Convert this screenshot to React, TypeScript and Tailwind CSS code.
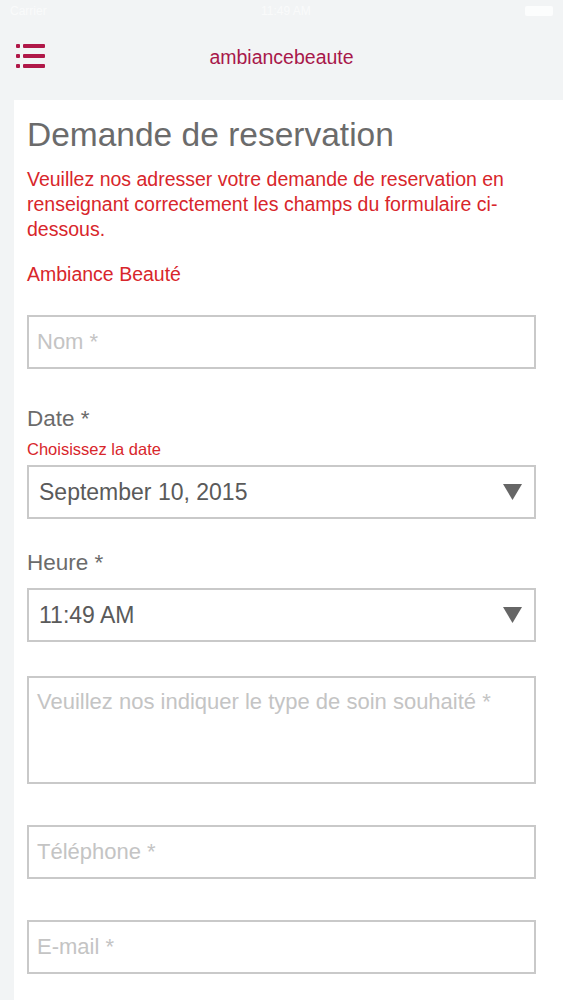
import React from "react";

function Select({ value }: { value: string }) {
  return (
    <div className="flex h-[54px] items-center justify-between border-2 border-[#c9c9c9] bg-white pl-[10px] pr-[12px]">
      <span className="text-[23px] text-[#5a5a5a]">{value}</span>
      <svg width="19" height="16" viewBox="0 0 19 16">
        <polygon points="0,0 19,0 9.5,16" fill="#666666" />
      </svg>
    </div>
  );
}

function Input({ placeholder, tall }: { placeholder: string; tall?: boolean }) {
  return (
    <div
      className={`border-2 border-[#c9c9c9] bg-white px-[8px] ${tall ? "h-[108px] pt-[11px]" : "flex h-[54px] items-center"}`}
    >
      <span className="text-[22px] leading-[26px] text-[#c4c4c4]">{placeholder}</span>
    </div>
  );
}

export default function App() {
  return (
    <div
      className="min-h-[1000px] w-[563px] overflow-hidden bg-[#f2f4f5]"
      style={{ fontFamily: '"Liberation Sans", Arial, sans-serif' }}
    >
      {/* status bar */}
      <div className="flex h-[22px] items-center justify-between px-[10px] text-[12px] text-white/60">
        <span>Carrier</span>
        <span>11:49 AM</span>
        <span className="h-[10px] w-[28px] rounded-[2px] bg-white/80" />
      </div>
      {/* nav */}
      <div className="relative flex h-[78px] justify-center pt-[24px]">
        <div className="absolute left-[16px] top-[22px] flex flex-col gap-[6px]">
          {[0, 1, 2].map((i) => (
            <div key={i} className="flex items-center gap-[3px]">
              <div className="h-[4px] w-[4px] rounded-[1px] bg-[#b01848]" />
              <div className="h-[4px] w-[22px] rounded-[1px] bg-[#b01848]" />
            </div>
          ))}
        </div>
        <span className="text-[19.5px] leading-[22px] text-[#a8184a]">ambiancebeaute</span>
      </div>
      {/* card */}
      <div className="ml-[14px] min-h-[900px] bg-white pl-[13px] pr-[27px] pt-[14px]">
        <h1 className="text-[33.5px] leading-[42px] text-[#6b6b6b]">Demande de reservation</h1>
        <p className="mt-[11px] max-w-[488px] text-[19.5px] leading-[25px] text-[#d8262b]">
          Veuillez nos adresser votre demande de reservation en renseignant correctement les champs du formulaire ci-dessous.
        </p>
        <p className="mt-[20px] text-[19.5px] leading-[25px] text-[#d8262b]">Ambiance Beauté</p>
        <div className="mt-[28px]">
          <Input placeholder="Nom *" />
        </div>
        <div className="mt-[37px] text-[22.5px] leading-[26px] text-[#6b6b6b]">Date *</div>
        <div className="mt-[8px] text-[16.5px] leading-[18px] text-[#d8262b]">Choisissez la date</div>
        <div className="mt-[7px]">
          <Select value="September 10, 2015" />
        </div>
        <div className="mt-[31px] text-[22.5px] leading-[26px] text-[#6b6b6b]">Heure *</div>
        <div className="mt-[12px]">
          <Select value="11:49 AM" />
        </div>
        <div className="mt-[34px]">
          <Input placeholder="Veuillez nos indiquer le type de soin souhaité *" tall />
        </div>
        <div className="mt-[41px]">
          <Input placeholder="Téléphone *" />
        </div>
        <div className="mt-[41px]">
          <Input placeholder="E-mail *" />
        </div>
      </div>
    </div>
  );
}
